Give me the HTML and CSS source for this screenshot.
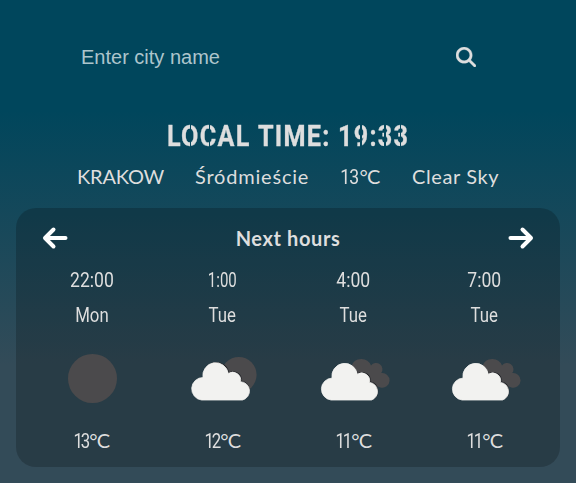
FILE: index.html
```html
<!DOCTYPE html>
<html lang="en">
<head>
<meta charset="utf-8">
<title>Weather</title>
<link rel="stylesheet" href="styles.css">
</head>
<body>
<form class="search">
  <input class="search-input" type="text" placeholder="Enter city name" aria-label="City">
  <button class="search-button" type="button" aria-label="Search"><svg width="20" height="20" viewBox="0 0 512 512"><path fill="currentColor" stroke="currentColor" stroke-width="8" d="M416 208c0 45.900-14.900 88.300-40 122.700L502.600 457.400c12.500 12.500 12.500 32.800 0 45.300s-32.800 12.500-45.300 0L330.700 376c-34.400 25.200-76.800 40-122.700 40C93.100 416 0 322.900 0 208S93.100 0 208 0S416 93.100 416 208zM208 352a144 144 0 1 0 0-288 144 144 0 1 0 0 288z"/></svg></button>
</form>
<h1 class="local-time"><span class="word local">LOCAL</span><span class="word time">TIME:</span><span class="word clock">19:33</span></h1>
<div class="info"><span class="city">KRAKOW</span><span class="district">Śródmieście</span><span class="now"><span class="narrow">13</span><span class="deg">°C</span></span><span class="sky">Clear Sky</span></div>
<section class="forecast">
  <header class="forecast-head">
    <svg class="arrow" width="26" height="24" viewBox="0 0 26 24"><path d="M11.500 3.500 3 12l8.500 8.500M3.500 12H23.500"/></svg>
    <h2>Next hours</h2>
    <svg class="arrow" width="26" height="24" viewBox="0 0 26 24"><path d="m14.500 3.500 8.500 8.500-8.500 8.500M22.500 12H2.500"/></svg>
  </header>
  <div class="hours">
    <article class="hour">
      <span class="line"><span class="narrow">22:00</span></span>
      <span class="line"><span class="narrow day">Mon</span></span>
      <svg class="icon" width="80" height="60" viewBox="0 0 80 60"><circle class="dark" cx="40.500" cy="30.500" r="24.500"/></svg>
      <span class="line temp"><span class="narrow">13</span><span class="deg">°C</span></span>
    </article>
    <article class="hour">
      <span class="line one"><span class="narrow">1:00</span></span>
      <span class="line"><span class="narrow day">Tue</span></span>
      <svg class="icon" width="80" height="60" viewBox="0 0 80 60"><circle class="dark" cx="55.800" cy="26.800" r="17.800"/><path class="edge" d="M18.500 51a11 11 0 0 1 2.500-21.500A12.600 12.600 0 0 1 46.200 24.300a8.600 8.600 0 0 1 12.600 8.500 9.900 9.900 0 0 1 2 18.700z"/><path class="cloud" d="M18.500 52a11.300 11.300 0 0 1 1.500-22.500A12.600 12.600 0 1 1 45.300 25.500a8 8 0 0 1 12.200 8.200A9.300 9.300 0 0 1 59.500 52z"/></svg>
      <span class="line temp"><span class="narrow">12</span><span class="deg">°C</span></span>
    </article>
    <article class="hour">
      <span class="line"><span class="narrow">4:00</span></span>
      <span class="line"><span class="narrow day">Tue</span></span>
      <svg class="icon" width="80" height="60" viewBox="0 0 80 60"><path class="dark" d="M37.500 18a10.400 10.400 0 0 1 19.500-.5 6.300 6.300 0 0 1 10.200 7.600A7.300 7.300 0 1 1 66.500 39.400L45 32z"/><path class="edge" d="M17.500 51a11 11 0 0 1 2.500-21.100A12.600 12.600 0 0 1 44.200 25a8.600 8.600 0 0 1 12.600 8.500 9.600 9.600 0 0 1 2 18z"/><path class="cloud" d="M17 52a11 11 0 0 1 1-21.900A12.500 12.500 0 1 1 43.300 26.200a8 8 0 0 1 12.200 8.200A9.100 9.100 0 0 1 57.500 52z"/></svg>
      <span class="line temp"><span class="narrow">11</span><span class="deg">°C</span></span>
    </article>
    <article class="hour">
      <span class="line"><span class="narrow">7:00</span></span>
      <span class="line"><span class="narrow day">Tue</span></span>
      <svg class="icon" width="80" height="60" viewBox="0 0 80 60"><path class="dark" d="M37.500 18a10.400 10.400 0 0 1 19.500-.5 6.300 6.300 0 0 1 10.200 7.600A7.300 7.300 0 1 1 66.500 39.400L45 32z"/><path class="edge" d="M17.500 51a11 11 0 0 1 2.500-21.100A12.600 12.600 0 0 1 44.200 25a8.600 8.600 0 0 1 12.600 8.500 9.600 9.600 0 0 1 2 18z"/><path class="cloud" d="M17 52a11 11 0 0 1 1-21.900A12.500 12.500 0 1 1 43.300 26.200a8 8 0 0 1 12.200 8.200A9.100 9.100 0 0 1 57.500 52z"/></svg>
      <span class="line temp"><span class="narrow">11</span><span class="deg">°C</span></span>
    </article>
  </div>
</section>
</body>
</html>
```
FILE: styles.css
```css
* { box-sizing: border-box; }
html { height: 100%; }
body {
  margin: 0;
  height: 483px;
  padding: 32px 16px 16px;
  overflow: hidden;
  background: linear-gradient(#00465c 0, #00465c 110px, #334b58 365px);
  color: #dedede;
  font: 20px/24px Lato, sans-serif;
}
.search { display: flex; justify-content: space-between; height: 50px; padding: 0 84px 0 65px; align-items: center; }
.search-input { width: 300px; padding: 0; border: 0; outline: 0; background: none; color: inherit; font: 20px "Liberation Sans", sans-serif; }
.search-input::placeholder { color: #adc5cc; opacity: 1; }
.search-button { display: flex; padding: 0; border: 0; background: none; color: #dedede; }
.local-time { display: flex; margin: 36px 0 0 151px; height: 36px; font: 700 30px/36px Roboto, sans-serif; white-space: nowrap; }
.word { flex: none; width: 91px; transform-origin: left; transform: scaleX(.84); letter-spacing: 1.500px; }
.word.time { width: 80px; -webkit-text-stroke: .4px #dedede; }
/* Thin vertical breaks through the round letters give the stencil look. */
.word.local, .word.clock { color: transparent; background-clip: text; -webkit-background-clip: text; -webkit-text-stroke: .4px transparent; }
.word.local {
  width: 100px;
  margin-right: -9px;
  background-image: linear-gradient(90deg, #dedede 27.300px, transparent 27.300px 28.900px, #dedede 28.900px 50px, transparent 50px 51.500px, #dedede 51.500px);
}
.word.clock {
  background-image: linear-gradient(90deg, #dedede 26.600px, transparent 26.600px 28.200px, #dedede 28.200px 55.300px, transparent 55.300px 56.800px, #dedede 56.800px 74px, transparent 74px 75.500px, #dedede 75.500px);
}
.info { display: flex; height: 24px; margin: 10px 0 20px; padding-left: 61px; white-space: nowrap; }
.city { width: 118px; letter-spacing: -.2px; }
.district { width: 144px; letter-spacing: .8px; }
.now { width: 73px; }
.now .narrow { letter-spacing: -1px; }
.sky { letter-spacing: .6px; }
.narrow { display: inline-block; font-family: Roboto, sans-serif; transform: scaleX(.88); }
.narrow.day { transform: scaleX(.84); }
.one .narrow { transform: scaleX(.75); }
.deg { letter-spacing: -.8px; }
.forecast { height: 259px; border-radius: 20px; background: rgba(0, 0, 0, .2); padding-top: 18px; }
.forecast-head { display: flex; justify-content: space-between; align-items: center; height: 24px; padding: 0 26px; }
.forecast-head h2 { margin: 0; font-size: 20px; line-height: 24px; letter-spacing: .6px; }
.arrow { fill: none; stroke: #fff; stroke-width: 4; stroke-linecap: round; stroke-linejoin: round; }
.hours { display: grid; grid-template-columns: repeat(4, 131px); padding: 17px 10px 0; }
.hour { display: flex; flex-direction: column; align-items: center; }
.line { height: 24px; margin-bottom: 11px; white-space: nowrap; }
.icon { margin: 11px 0 20px; }
.temp { margin: 0 2px 0 0; }
.temp .narrow { letter-spacing: -2.500px; transform: scaleX(.84); }
.dark { fill: #4b4a4c; }
.edge { fill: #25272b; }
.cloud { fill: #f2f2f0; stroke: #f2f2f0; stroke-width: .8; }
```
